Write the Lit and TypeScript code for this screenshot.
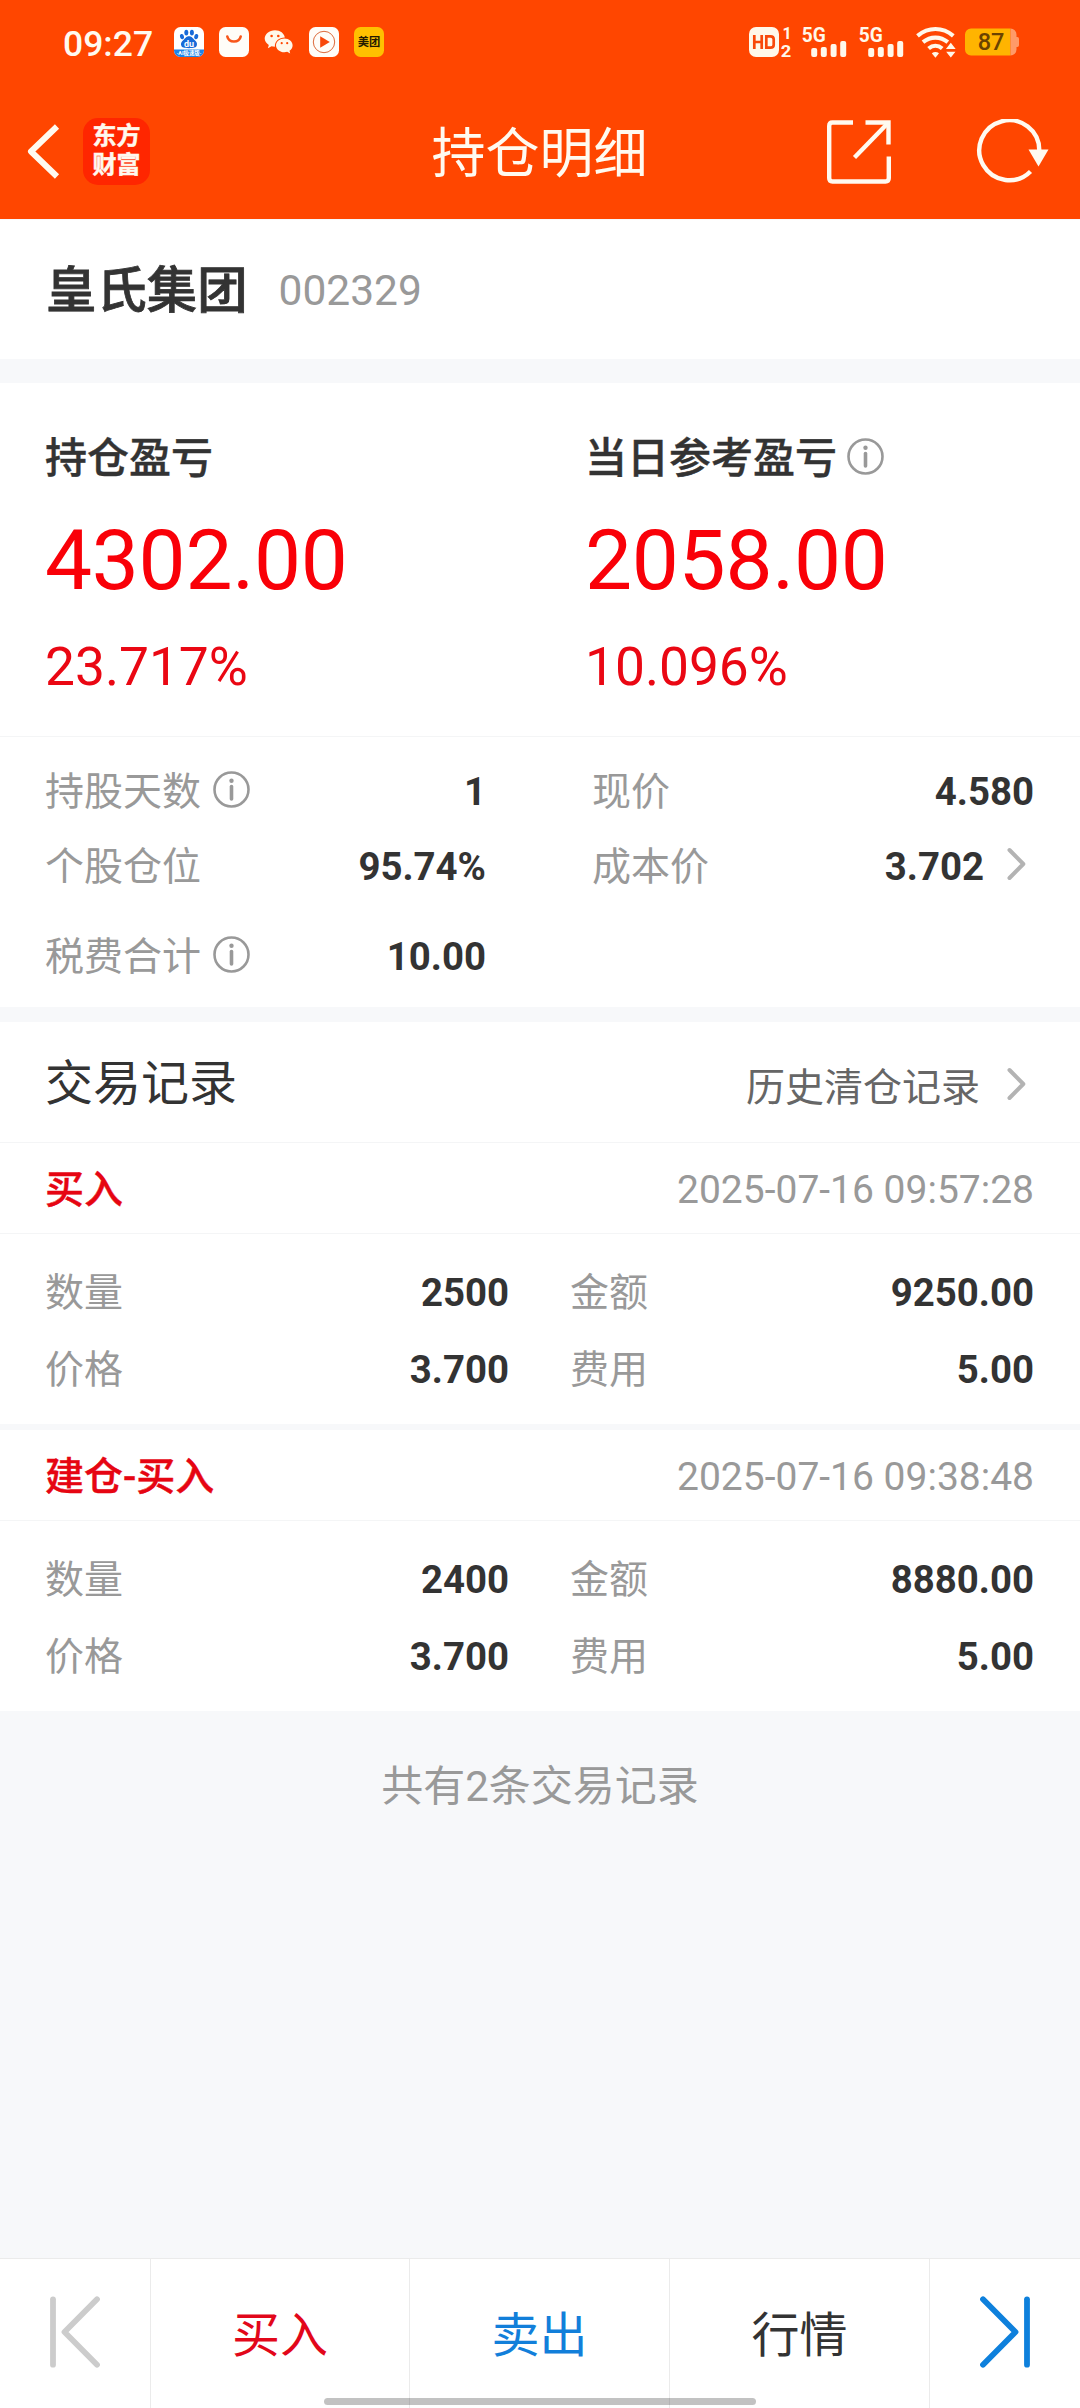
import { LitElement, html, css, svg, nothing } from "lit";
import { customElement, property } from "lit/decorators.js";

interface Field {
  label: string;
  value: string;
  info?: boolean;
  link?: boolean;
}

interface TradeRecord {
  kind: string;
  time: string;
  fields: Field[];
}

const leftFields: Field[] = [
  { label: "持股天数", value: "1", info: true },
  { label: "个股仓位", value: "95.74%" },
  { label: "税费合计", value: "10.00", info: true },
];

const rightFields: Field[] = [
  { label: "现价", value: "4.580" },
  { label: "成本价", value: "3.702", link: true },
];

const records: TradeRecord[] = [
  {
    kind: "买入",
    time: "2025-07-16 09:57:28",
    fields: [
      { label: "数量", value: "2500" },
      { label: "金额", value: "9250.00" },
      { label: "价格", value: "3.700" },
      { label: "费用", value: "5.00" },
    ],
  },
  {
    kind: "建仓-买入",
    time: "2025-07-16 09:38:48",
    fields: [
      { label: "数量", value: "2400" },
      { label: "金额", value: "8880.00" },
      { label: "价格", value: "3.700" },
      { label: "费用", value: "5.00" },
    ],
  },
];

const infoIcon = html`<svg class="info" width="37" height="37" viewBox="0 0 37 37">
  <circle cx="18.5" cy="18.5" r="17" fill="none" stroke="#999" stroke-width="2.6" />
  <circle cx="18.5" cy="9.8" r="2.2" fill="#999" />
  <path d="M18.5 15.6V28" stroke="#999" stroke-width="3.6" stroke-linecap="round" />
</svg>`;

const chevronIcon = html`<svg class="chevron" width="19" height="34" viewBox="0 0 19 34">
  <path d="M2.5 3L16.3 17L2.5 31" fill="none" stroke="#b3b3b3" stroke-width="4" stroke-linecap="round" stroke-linejoin="round" />
</svg>`;

@customElement("status-bar")
export class StatusBar extends LitElement {
  static styles = css`
    :host {
      display: flex;
      align-items: center;
      height: 84px;
      box-sizing: border-box;
      padding: 0 60px 0 63px;
      color: #fffaf0;
      font-family: Roboto, "Noto Sans CJK SC", sans-serif;
    }
    svg {
      display: block;
      flex: none;
      overflow: visible;
    }
    .time {
      width: 111px;
      padding-top: 3px;
      font-size: 35.5px;
      line-height: 42px;
      font-weight: 500;
    }
    .apps {
      display: flex;
      gap: 15px;
      flex: 1;
    }
    .hd { margin-right: 11px; }
    .signal { margin-right: 12px; }
    .wifi { margin-right: 9px; }
  `;

  private signal() {
    return html`<svg class="signal" width="45" height="30" viewBox="0 0 45 30">
      <text x="-0.3" y="14.8" font-size="19.5" font-weight="700" fill="#fff8ea" textLength="24" lengthAdjust="spacingAndGlyphs">5G</text>
      <g fill="#fff8ea">
        <rect x="9.2" y="21" width="6" height="9" rx="2" />
        <rect x="18.8" y="20" width="6" height="10" rx="2" />
        <rect x="28.6" y="17" width="6" height="13" rx="2" />
        <rect x="38.2" y="14" width="6" height="16" rx="2" />
      </g>
    </svg>`;
  }

  render() {
    return html`
      <span class="time">09:27</span>
      <div class="apps">
        <svg width="30" height="30" viewBox="0 0 30 30">
          <defs><clipPath id="tile"><rect width="30" height="30" rx="6.5" /></clipPath></defs>
          <g clip-path="url(#tile)">
            <rect width="30" height="30" fill="#fff" />
            <rect y="22.5" width="30" height="8" fill="#1d83e8" />
            <g fill="#1769d8">
              <ellipse cx="12.3" cy="5.6" rx="2" ry="2.9" />
              <ellipse cx="17.9" cy="5.6" rx="2" ry="2.9" />
              <ellipse cx="8" cy="9.6" rx="2" ry="2.7" transform="rotate(-18 8 9.6)" />
              <ellipse cx="22.2" cy="9.6" rx="2" ry="2.7" transform="rotate(18 22.2 9.6)" />
              <path d="M15 9.3c3 0 4 2.4 5.6 3.8c2.4 2 2.6 3.4 2.3 5c-.6 2.8-3 3.1-7.9 3.1s-7.3-.3-7.9-3.1c-.3-1.6-.1-3 2.3-5c1.6-1.4 2.6-3.8 5.6-3.8z" />
            </g>
            <text x="15" y="19.8" font-size="9" font-weight="700" fill="#fff" text-anchor="middle">du</text>
            <text x="15" y="28.4" font-size="5.4" font-weight="700" fill="#fff" text-anchor="middle">·AI极速版·</text>
          </g>
        </svg>
        <svg width="30" height="30" viewBox="0 0 30 30">
          <rect width="30" height="30" rx="6.5" fill="#fffdf8" />
          <path d="M8.3 9.5c1.6 6.7 11.8 6.7 13.4 0" fill="none" stroke="#f8561a" stroke-width="2.6" stroke-linecap="round" />
        </svg>
        <svg width="30" height="30" viewBox="0 0 30 30">
          <path d="M11 3.2c5.2 0 9.3 3.2 9.8 7.3c-5.8 0-10.3 3.7-9.9 9.3c-1.3 0-2.3-.2-3.4-.5l-3.6 2l.9-3.3c-2.6-1.7-4.1-4-4.1-6.4c0-4.6 4.6-8.4 10.3-8.4z" fill="#fff8ea" />
          <path d="M20.4 11.5c4.6 0 8.2 3.1 8.2 6.9c0 2.2-1.2 4.1-3.1 5.4l.7 2.7l-3-1.7c-.9.2-1.8.4-2.8.4c-4.6 0-8.4-3.1-8.4-6.8s3.8-6.9 8.4-6.9z" fill="#fff8ea" />
          <g fill="#ff4600">
            <circle cx="7.6" cy="9" r="1.3" /><circle cx="14.3" cy="9" r="1.3" />
            <circle cx="17.7" cy="16.2" r="1.1" /><circle cx="23.2" cy="16.2" r="1.1" />
          </g>
        </svg>
        <svg width="30" height="30" viewBox="0 0 30 30">
          <rect width="30" height="30" rx="6.5" fill="#fffdf8" />
          <circle cx="15" cy="15" r="10.7" fill="none" stroke="#dc6a3a" stroke-width="1" />
          <path d="M11.2 9.3v11.4l9.6-5.7z" fill="#f8480a" />
        </svg>
        <svg width="30" height="30" viewBox="0 0 30 30">
          <rect width="30" height="30" rx="6.5" fill="#ffc000" />
          <text x="15" y="19.3" font-size="11.3" font-weight="700" fill="#241a00" text-anchor="middle">美团</text>
        </svg>
      </div>
      <svg class="hd" width="42" height="30" viewBox="0 0 42 30">
        <rect width="30" height="30" rx="7" fill="#fff8ea" />
        <g fill="none" stroke="#f8480a" stroke-width="2.7">
          <path d="M5.3 8v14M12.7 8v14M5.3 15h7.4" />
          <path d="M17.3 9.3h4.2c2 0 3.2 1.2 3.2 3v5.4c0 1.8-1.2 3-3.2 3h-4.2z" />
        </g>
        <text x="33.5" y="12" font-size="16" font-weight="700" fill="#fff8ea">1</text>
        <text x="31.7" y="29.5" font-size="17" font-weight="700" fill="#fff8ea" textLength="10.5" lengthAdjust="spacingAndGlyphs">2</text>
      </svg>
      ${this.signal()} ${this.signal()}
      <svg class="wifi" width="40" height="31" viewBox="0 0 40 31">
        <g fill="none" stroke="#fff8ea" stroke-width="4.2">
          <path d="M1.5 8.8C12.5-.3 26.5-.3 37.3 8.8" />
          <path d="M7 15.2C14.5 9 24.3 9 31.8 15.2" />
          <path d="M12.6 21.5C16.8 18 22 18 26.2 21.5" />
        </g>
        <path d="M15.8 26.3c2.2-1.8 5-1.8 7.2 0l-3.6 4.5z" fill="#fff8ea" />
        <path d="M34.8 14.5l6.2 8.1h-12.4zM34.8 31.8l-6.2-7.8h12.4z" fill="#fff8ea" stroke="#ff4600" stroke-width="1.4" />
      </svg>
      <svg width="55" height="28" viewBox="0 0 55 28">
        <path d="M6 .5H45.5V27.5H6a6 6 0 0 1-6-6V6.5a6 6 0 0 1 6-6z" fill="#ffb400" />
        <path d="M45.5.5a6 6 0 0 1 6 6V9h.8a1.7 1.7 0 0 1 1.7 1.7v6.6a1.7 1.7 0 0 1-1.7 1.7h-.8v2.5a6 6 0 0 1-6 6z" fill="#ff9a68" />
        <text x="26" y="22.3" font-size="23.5" font-weight="500" fill="#6b4300" text-anchor="middle">87</text>
      </svg>
    `;
  }
}

@customElement("data-field")
export class DataField extends LitElement {
  @property() label = "";
  @property() value = "";
  @property({ type: Boolean }) info = false;
  @property({ type: Boolean }) link = false;

  static styles = css`
    :host {
      display: flex;
      align-items: center;
      height: 60px;
      font-size: 39px;
      line-height: 60px;
      color: #999;
    }
    .value {
      margin-left: auto;
      color: #333;
      font-size: 38.4px;
      font-weight: 700;
    }
    .info {
      margin: 0 0 6px 12px;
    }
    .chevron {
      margin: 0 8px 6px 23px;
    }
  `;

  render() {
    return html`
      <span>${this.label}</span>${this.info ? infoIcon : nothing}
      <span class="value">${this.value}</span>${this.link ? chevronIcon : nothing}
    `;
  }
}

@customElement("app-root")
export class AppRoot extends LitElement {
  static styles = css`
    :host {
      display: flex;
      flex-direction: column;
      width: 1080px;
      height: 2408px;
      background: #f7f8fa;
      color: #333;
      font-family: Roboto, "Noto Sans CJK SC", sans-serif;
      overflow: hidden;
    }
    svg {
      display: block;
      flex: none;
    }
    .top {
      height: 219px;
      background: #ff4600;
    }
    .nav {
      display: grid;
      grid-template-columns: 1fr auto 1fr;
      align-items: center;
      height: 135px;
      padding: 0 30px 0 26px;
    }
    .nav-left {
      display: flex;
      align-items: center;
      gap: 22px;
    }
    .nav-right {
      display: flex;
      justify-content: flex-end;
      align-items: center;
      gap: 85px;
    }
    .nav-title {
      padding: 6px 0 0 3px;
      font-size: 54px;
      line-height: 129px;
      color: #fffaf0;
    }
    .brand {
      display: grid;
      place-content: center;
      width: 67px;
      height: 67px;
      box-sizing: border-box;
      padding-bottom: 1px;
      border-radius: 15px;
      background: #ff2600;
      color: #fff8ee;
      font-size: 24px;
      line-height: 29px;
      font-weight: 700;
      -webkit-text-stroke: 0.5px #fff8ee;
    }
    .stock {
      display: flex;
      align-items: center;
      gap: 31px;
      height: 139px;
      margin-top: 1px;
      padding: 0 46px;
      background: #fff;
    }
    .stock-name {
      padding-top: 2px;
      font-size: 50.4px;
      line-height: 60px;
      font-weight: 500;
      -webkit-text-stroke: 0.8px #333;
    }
    .stock-code {
      font-size: 42.5px;
      color: #999;
      padding-top: 2px;
    }
    .summary {
      display: grid;
      grid-template-columns: 540px 1fr;
      height: 353px;
      margin-top: 24px;
      padding: 46px 45px 0;
      box-sizing: border-box;
      background: #fff;
    }
    .summary-title {
      display: flex;
      align-items: center;
      font-size: 42px;
      line-height: 60px;
      font-weight: 500;
      -webkit-text-stroke: 0.4px #333;
    }
    .summary-title .info {
      margin: 0 0 6px 10px;
    }
    .amount {
      margin-top: 21px;
      font-size: 83.8px;
      line-height: 100px;
      letter-spacing: -0.3px;
      color: #f90008;
    }
    .ratio {
      margin-top: 27px;
      font-size: 53.3px;
      line-height: 60px;
      color: #ea0713;
    }
    .details {
      display: grid;
      grid-template-columns: 441px 442px;
      column-gap: 106px;
      height: 271px;
      box-sizing: border-box;
      border-top: 1px solid #f4f5f6;
      padding: 25px 46px 0 45px;
      background: #fff;
    }
    .detail-col {
      display: flex;
      flex-direction: column;
      gap: 15px;
    }
    .detail-col data-field:nth-child(3) {
      margin-top: 15px;
    }
    .records-head {
      display: flex;
      align-items: center;
      justify-content: space-between;
      height: 120px;
      margin-top: 15px;
      padding: 0 54px 0 45px;
      background: #fff;
    }
    .records-title {
      padding-top: 3px;
      font-size: 48px;
      line-height: 60px;
    }
    .history {
      display: flex;
      align-items: center;
      gap: 27px;
      padding-top: 11px;
      font-size: 39px;
      line-height: 60px;
      color: #666;
    }
    .history .chevron {
      margin-bottom: 7px;
    }
    .record {
      background: #fff;
    }
    .record + .record {
      margin-top: 6px;
    }
    .record-head {
      display: flex;
      justify-content: space-between;
      height: 91px;
      box-sizing: border-box;
      border-bottom: 1px solid #f4f5f6;
      padding: 2px 46px 0 45px;
      font-size: 39px;
      line-height: 90px;
    }
    .record:first-of-type .record-head {
      height: 92px;
      border-top: 1px solid #f4f5f6;
    }
    .record-kind {
      color: #e60512;
      font-weight: 500;
      -webkit-text-stroke: 0.4px #e60512;
    }
    .record-time {
      color: #999;
    }
    .record-body {
      display: grid;
      grid-template-columns: 464px 464px;
      gap: 17px 61px;
      padding: 29px 46px 24px 45px;
    }
    .total {
      flex: 1;
      padding-top: 46px;
      text-align: center;
      font-size: 42px;
      line-height: 60px;
      color: #999;
    }
    .actions {
      position: relative;
      display: grid;
      grid-template-columns: 151px 259px 260px 260px 150px;
      height: 150px;
      box-sizing: border-box;
      border-top: 1px solid #ebebeb;
      background: #fff;
    }
    .action {
      display: grid;
      place-items: center;
      border-right: 1px solid #ebebeb;
      font-size: 48px;
      line-height: 60px;
      padding-top: 4px;
    }
    .action.step {
      padding: 0 1px 4px 0;
    }
    .action:last-of-type {
      border-right: 0;
    }
    .action.buy { color: #e2071a; }
    .action.sell { color: #127fda; }
    .home-bar {
      position: absolute;
      left: 324px;
      bottom: 3px;
      width: 432px;
      height: 7px;
      border-radius: 4px;
      background: rgba(0, 0, 0, 0.24);
    }
  `;

  private field(f: Field) {
    return html`<data-field .label=${f.label} .value=${f.value} .info=${!!f.info} .link=${!!f.link}></data-field>`;
  }

  private stepIcon(color: string, forward: boolean) {
    return html`<svg width="52" height="72" viewBox="0 0 52 72">
      ${svg`<g transform=${forward ? "matrix(-1 0 0 1 52 0)" : ""} fill="none" stroke=${color} stroke-width="5.8" stroke-linecap="round" stroke-linejoin="round">
        <path d="M4 3.3V68.7" /><path d="M48 3.3L15.5 36L48 68.7" />
      </g>`}
    </svg>`;
  }

  render() {
    return html`
      <header class="top">
        <status-bar></status-bar>
        <nav class="nav">
          <div class="nav-left">
            <svg width="35" height="57" viewBox="0 0 35 57">
              <path d="M31 3.5L5 28.5L31 53.5" fill="none" stroke="#fffaf0" stroke-width="6" stroke-linejoin="round" />
            </svg>
            <div class="brand"><span>东方</span><span>财富</span></div>
          </div>
          <div class="nav-title">持仓明细</div>
          <div class="nav-right">
            <svg width="64" height="64" viewBox="0 0 64 64">
              <g fill="none" stroke="#fffaf0" stroke-width="4.4">
                <path d="M26 2.5H5.5Q2.2 2.5 2.2 6V58Q2.2 61.5 5.5 61.5H58.5Q61.8 61.5 61.8 58V36.5" />
                <path d="M38.5 2.5H61.5V24.5" />
                <path d="M61 3L27.5 37.5" />
              </g>
            </svg>
            <svg width="74" height="66" viewBox="0 0 74 66">
              <path d="M54.5 52.5A30 30 0 1 1 63.3 31.5" fill="none" stroke="#fffaf0" stroke-width="4.4" />
              <path d="M52.5 30.5H72.5L62.5 47.5z" fill="#fffaf0" />
            </svg>
          </div>
        </nav>
      </header>

      <section class="stock">
        <span class="stock-name">皇氏集团</span>
        <span class="stock-code">002329</span>
      </section>

      <section class="summary">
        <div>
          <div class="summary-title">持仓盈亏</div>
          <div class="amount">4302.00</div>
          <div class="ratio">23.717%</div>
        </div>
        <div>
          <div class="summary-title">当日参考盈亏${infoIcon}</div>
          <div class="amount">2058.00</div>
          <div class="ratio">10.096%</div>
        </div>
      </section>

      <section class="details">
        <div class="detail-col">${leftFields.map((f) => this.field(f))}</div>
        <div class="detail-col">${rightFields.map((f) => this.field(f))}</div>
      </section>

      <div class="records-head">
        <span class="records-title">交易记录</span>
        <span class="history">历史清仓记录${chevronIcon}</span>
      </div>

      ${records.map(
        (r) => html`<article class="record">
          <div class="record-head">
            <span class="record-kind">${r.kind}</span>
            <span class="record-time">${r.time}</span>
          </div>
          <div class="record-body">${r.fields.map((f) => this.field(f))}</div>
        </article>`
      )}

      <div class="total">共有2条交易记录</div>

      <footer class="actions">
        <div class="action step">${this.stepIcon("#ccc", false)}</div>
        <div class="action buy">买入</div>
        <div class="action sell">卖出</div>
        <div class="action">行情</div>
        <div class="action step">${this.stepIcon("#0e80dc", true)}</div>
        <span class="home-bar"></span>
      </footer>
    `;
  }
}
